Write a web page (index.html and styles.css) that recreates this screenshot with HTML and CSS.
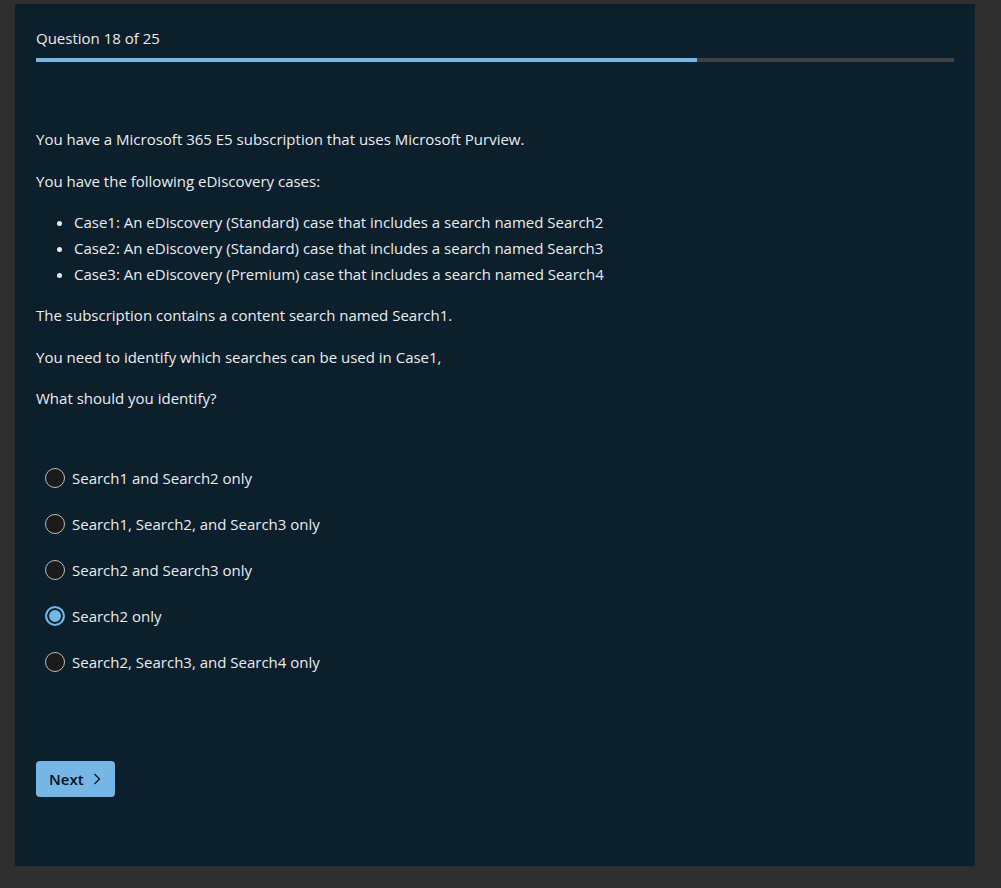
FILE: index.html
```html
<!DOCTYPE html>
<html lang="en">
<head>
  <meta charset="UTF-8" />
  <meta name="viewport" content="width=device-width, initial-scale=1.0"/>
  <title>Question 18 of 25</title>
  <link rel="stylesheet" href="styles.css">
</head>
<body>

<main class="quiz">
  <header class="quiz__header">
    <div class="quiz__counter">Question 18 of 25</div>
    <div class="quiz__progress">
      <div class="quiz__progress__fill" style="width: 72%;"></div>
    </div>
  </header>

  <section class="quiz__question">
    <p>You have a Microsoft 365 E5 subscription that uses Microsoft Purview.</p>
    <p>You have the following eDiscovery cases:</p>
    <ul>
      <li>Case1: An eDiscovery (Standard) case that includes a search named Search2</li>
      <li>Case2: An eDiscovery (Standard) case that includes a search named Search3</li>
      <li>Case3: An eDiscovery (Premium) case that includes a search named Search4</li>
    </ul>
    <p>The subscription contains a content search named Search1.</p>
    <p>You need to identify which searches can be used in Case1,</p>
    <p>What should you identify?</p>
  </section>

  <form class="quiz__options">
    <label class="quiz__option">
      <input type="radio" name="answer" value="a">
      <span>Search1 and Search2 only</span>
    </label>
    <label class="quiz__option">
      <input type="radio" name="answer" value="b">
      <span>Search1, Search2, and Search3 only</span>
    </label>
    <label class="quiz__option">
      <input type="radio" name="answer" value="c">
      <span>Search2 and Search3 only</span>
    </label>
    <label class="quiz__option">
      <input type="radio" name="answer" value="d" checked>
      <span>Search2 only</span>
    </label>
    <label class="quiz__option">
      <input type="radio" name="answer" value="e">
      <span>Search2, Search3, and Search4 only</span>
    </label>
  </form>

  <button class="quiz__next" type="button">
    Next
    <svg class="quiz__next__icon" width="8" height="12" viewBox="0 0 8 12" fill="none" stroke="currentColor" stroke-width="1.2">
      <path d="M1.5 1l5 5-5 5"/>
    </svg>
  </button>
</main>

</body>
</html>
```

FILE: styles.css
```css
* {
  box-sizing: border-box;
}
body {
  font-family: 'Open Sans', 'Noto Sans', sans-serif;
  font-size: 15px;
  line-height: 26px;
  background: #2f2f2f;
  color: #ececec;
  margin: 0;
  padding: 4px 0 0 15px;
}

.quiz {
  width: 960px;
  height: 862px;
  background: #0b1f2d;
  padding: 21px 21px 0;
}

.quiz__counter {
  margin-bottom: 7px;
}
.quiz__progress {
  height: 4px;
  background: #414141;
}
.quiz__progress__fill {
  height: 100%;
  background: #75b6e7;
}

.quiz__question {
  padding-top: 64px;
}
.quiz__question p {
  margin: 0 0 15.5px;
}
.quiz__question ul {
  margin: 0 0 15px;
  padding-left: 38px;
}

.quiz__options {
  display: flex;
  flex-direction: column;
  gap: 20px;
  padding: 38px 0 0 9px;
}
.quiz__option {
  display: flex;
  align-items: center;
  gap: 7px;
  cursor: pointer;
}
.quiz__option input {
  appearance: none;
  margin: 0;
  width: 20px;
  height: 20px;
  border-radius: 50%;
  border: 1px solid #bdbdbd;
  background: #1a1a1a;
  cursor: pointer;
}
.quiz__option input:checked {
  border: 2px solid #75b6e7;
  background: #75b6e7;
  box-shadow: inset 0 0 0 2px #0b1f2d;
}

.quiz__next {
  display: flex;
  align-items: center;
  gap: 9px;
  margin-top: 86px;
  height: 36px;
  padding: 0 14px 0 13px;
  border: none;
  border-radius: 4px;
  background: #75b6e7;
  color: #06121a;
  font-family: inherit;
  font-size: 15px;
  font-weight: 600;
  cursor: pointer;
}
```
